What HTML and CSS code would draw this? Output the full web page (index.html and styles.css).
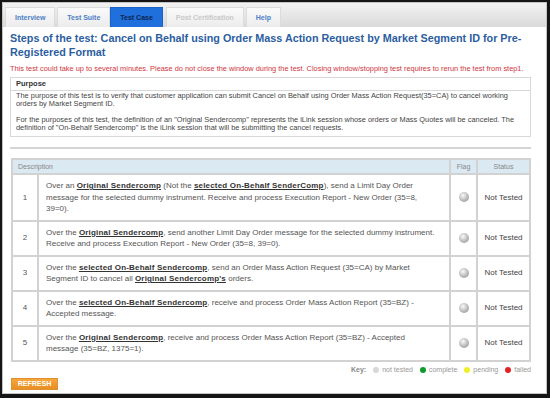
FILE: index.html
```html
<!DOCTYPE html>
<html>
<head>
<meta charset="utf-8">
<link rel="stylesheet" href="styles.css">
</head>
<body>
<div class="frame">
  <div class="tabbar">
    <span class="tab">Interview</span>
    <span class="tab">Test Suite</span>
    <span class="tab active">Test Case</span>
    <span class="tab disabled">Post Certification</span>
    <span class="tab">Help</span>
  </div>
  <div class="content">
    <h1 class="title">Steps of the test: Cancel on Behalf using Order Mass Action Request by Market Segment ID for Pre-Registered Format</h1>
    <p class="warn">This test could take up to several minutes. Please do not close the window during the test. Closing window/stopping test requires to rerun the test from step1.</p>
    <div class="purpose">
      <div class="purpose-head">Purpose</div>
      <div class="purpose-body">The purpose of this test is to verify that customer application can submit Cancel on Behalf using Order Mass Action Request(35=CA) to cancel working orders by Market Segment ID.<br><br>For the purposes of this test, the definition of an "Original Sendercomp" represents the iLink session whose orders or Mass Quotes will be canceled. The definition of "On-Behalf Sendercomp" is the iLink session that will be submitting the cancel requests.</div>
    </div>
    <div class="rule"></div>
    <table class="steps">
      <thead>
        <tr><th colspan="2" class="h-desc">Description</th><th class="h-flag">Flag</th><th class="h-status">Status</th></tr>
      </thead>
      <tbody>
        <tr>
          <td class="num">1</td>
          <td class="desc">Over an <b>Original Sendercomp</b> (Not the <b>selected On-Behalf SenderComp</b>), send a Limit Day Order message for the selected dummy instrument. Receive and process Execution Report - New Order (35=8, 39=0).</td>
          <td class="flag"><span class="dot"></span></td>
          <td class="status">Not Tested</td>
        </tr>
        <tr>
          <td class="num">2</td>
          <td class="desc">Over the <b>Original Sendercomp</b>, send another Limit Day Order message for the selected dummy instrument. Receive and process Execution Report - New Order (35=8, 39=0).</td>
          <td class="flag"><span class="dot"></span></td>
          <td class="status">Not Tested</td>
        </tr>
        <tr>
          <td class="num">3</td>
          <td class="desc">Over the <b>selected On-Behalf Sendercomp</b>, send an Order Mass Action Request (35=CA) by Market Segment ID to cancel all <b>Original Sendercomp's</b> orders.</td>
          <td class="flag"><span class="dot"></span></td>
          <td class="status">Not Tested</td>
        </tr>
        <tr>
          <td class="num">4</td>
          <td class="desc">Over the <b>selected On-Behalf Sendercomp</b>, receive and process Order Mass Action Report (35=BZ) - Accepted message.</td>
          <td class="flag"><span class="dot"></span></td>
          <td class="status">Not Tested</td>
        </tr>
        <tr>
          <td class="num">5</td>
          <td class="desc">Over the <b>Original Sendercomp</b>, receive and process Order Mass Action Report (35=BZ) - Accepted message (35=BZ, 1375=1).</td>
          <td class="flag"><span class="dot"></span></td>
          <td class="status">Not Tested</td>
        </tr>
      </tbody>
    </table>
    <div class="key">
      <b class="key-label">Key:</b>
      <span class="key-item"><span class="kdot k-gray"></span>not tested</span>
      <span class="key-item"><span class="kdot k-green"></span>complete</span>
      <span class="key-item"><span class="kdot k-yellow"></span>pending</span>
      <span class="key-item"><span class="kdot k-red"></span>failed</span>
    </div>
    <button class="refresh">REFRESH</button>
  </div>
</div>
</body>
</html>
```

FILE: styles.css
```css
html, body {
  margin: 0;
  padding: 0;
  height: 100%;
}
body {
  background: #151515;
  font-family: "Liberation Sans", Arial, sans-serif;
  overflow: hidden;
}
.frame {
  box-sizing: border-box;
  margin: 2px 3px 0 2px;
  height: 392px;
  border: 1px solid #c4c4c4;
  background: #fff;
}
.tabbar {
  height: 24px;
  background: linear-gradient(#f2f2f2, #dadada);
  display: flex;
  align-items: flex-end;
  padding-left: 2px;
  gap: 2px;
}
.tab {
  height: 20px;
  box-sizing: border-box;
  padding: 0 9px;
  display: flex;
  align-items: center;
  font-size: 7px;
  font-weight: bold;
  color: #4d80c6;
  background: linear-gradient(#fafafa, #ececec);
  border: 1px solid #dcdcdc;
  border-bottom: none;
}
.tab.active {
  background: #1f6fdc;
  color: #0c2550;
  border-color: #1a62c4;
  margin-left: -2px;
}
.tab.disabled {
  color: #c9c9c9;
  margin-left: 1px;
}
.content {
  padding: 4px 15px 0 7px;
}
.title {
  margin: 0;
  font-size: 10.8px;
  line-height: 14px;
  font-weight: bold;
  color: #2c5e9f;
}
.warn {
  margin: 5px 0 0;
  font-size: 7.4px;
  line-height: 9px;
  color: #d0343c;
  white-space: nowrap;
}
.purpose {
  margin-top: 4px;
  border: 1px solid #d8d8d8;
}
.purpose-head {
  height: 12px;
  line-height: 12px;
  padding-left: 5px;
  font-size: 7.5px;
  font-weight: bold;
  color: #333;
  border-bottom: 1px solid #d8d8d8;
}
.purpose-body {
  padding: 1px 8px 4px 5px;
  font-size: 7.4px;
  line-height: 8px;
  color: #444;
}
.rule {
  margin-top: 10px;
  height: 2px;
  background: #d4d4d4;
}
.steps {
  margin-top: 9px;
  margin-left: 1px;
  border-collapse: collapse;
  border: 2px solid #d2d2d2;
}
.steps th {
  background: #dae9f2;
  font-size: 7px;
  font-weight: normal;
  color: #888;
  height: 13px;
  padding: 0;
  border: 2px solid #d2d2d2;
}
.h-desc {
  text-align: left;
  padding-left: 5px !important;
}
.steps td {
  border: 2px solid #d2d2d2;
  font-size: 8px;
  line-height: 11.5px;
  color: #555;
  padding: 0;
}
.num {
  width: 24px;
  text-align: center;
}
.steps .desc {
  width: 391px;
  padding: 5px 12px 5px 7px;
}
.desc b {
  color: #333;
  text-decoration: underline;
  letter-spacing: 0.18px;
}
.flag {
  width: 25px;
  text-align: center;
}
.status {
  width: 51px;
  text-align: center;
  color: #444 !important;
}
.dot {
  display: inline-block;
  width: 10px;
  height: 10px;
  border-radius: 50%;
  background: radial-gradient(circle at 40% 35%, #fafafa 0, #c4c4c4 45%, #8a8a8a 100%);
  vertical-align: middle;
}
.key {
  margin-top: 3px;
  display: flex;
  justify-content: flex-end;
  align-items: center;
  gap: 7px;
  font-size: 7px;
  line-height: 10px;
  color: #999;
}
.key-label {
  color: #888;
}
.key-item {
  display: flex;
  align-items: center;
  gap: 3px;
}
.kdot {
  width: 6px;
  height: 6px;
  border-radius: 50%;
  display: inline-block;
}
.k-gray { background: #d8d8d8; }
.k-green { background: #0f9a2a; }
.k-yellow { background: #f0f02a; }
.k-red { background: #e42424; }
.refresh {
  margin-top: 3px;
  margin-left: 1px;
  height: 12px;
  width: 47px;
  padding: 0;
  border: 1px solid #e09030;
  background: linear-gradient(#f6a63e, #e88f22);
  color: #fff;
  font-family: "Liberation Sans", Arial, sans-serif;
  font-weight: bold;
  font-size: 7px;
  display: block;
}
```
